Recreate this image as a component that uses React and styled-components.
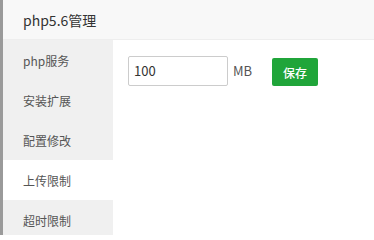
import styled, { createGlobalStyle } from "styled-components";

const GlobalStyle = createGlobalStyle`
    html, body {
        margin: 0;
        padding: 0;
        background: #fff;
        font-family: "Microsoft YaHei", "Noto Sans CJK SC", "Liberation Sans", sans-serif;
    }
`;

const Page = styled.div`
    display: flex;
    width: 374px;
    height: 235px;
    overflow: hidden;
`;

const Backdrop = styled.div`
    width: 3px;
    flex-shrink: 0;
    background: #9a9a9a;
`;

const Layer = styled.div`
    flex: 1;
    display: flex;
    flex-direction: column;
    background: #fff;
`;

const Title = styled.div`
    height: 39px;
    flex-shrink: 0;
    display: flex;
    align-items: center;
    padding-left: 20px;
    background: #f8f8f8;
    border-bottom: 1px solid #eee;
    color: #333;
    font-size: 14px;
`;

const Body = styled.div`
    flex: 1;
    display: flex;
`;

const Menu = styled.div`
    width: 110px;
    flex-shrink: 0;
    display: flex;
    flex-direction: column;
    background: #f0f0f0;
`;

const MenuItem = styled.div`
    height: 40px;
    flex-shrink: 0;
    display: flex;
    align-items: center;
    padding-left: 20px;
    font-size: 12px;
    color: #555;
    background: ${(p) => (p.$active ? "#fff" : "transparent")};
    cursor: pointer;
`;

const Content = styled.div`
    flex: 1;
    padding: 15px;
`;

const Line = styled.div`
    display: flex;
    align-items: center;
`;

const Input = styled.input`
    width: 100px;
    height: 30px;
    box-sizing: border-box;
    border: 1px solid #ccc;
    border-radius: 2px;
    padding: 0 5px;
    font-family: inherit;
    font-size: 13px;
    color: #333;
    outline: none;
`;

const Unit = styled.span`
    margin-left: 5px;
    font-size: 13px;
    color: #555;
`;

const SaveButton = styled.button`
    margin-left: 20px;
    margin-top: 3px;
    height: 28px;
    padding: 0 11px;
    border: none;
    border-radius: 2px;
    background: #20a53a;
    color: #fff;
    font-family: inherit;
    font-size: 12px;
    font-weight: 500;
    cursor: pointer;
`;

const items = ["php服务", "安装扩展", "配置修改", "上传限制", "超时限制"];

export default function App() {
    return (
        <Page>
            <GlobalStyle />
            <Backdrop />
            <Layer>
                <Title>php5.6管理</Title>
                <Body>
                    <Menu>
                        {items.map((name) => (
                            <MenuItem key={name} $active={name === "上传限制"}>
                                {name}
                            </MenuItem>
                        ))}
                    </Menu>
                    <Content>
                        <Line>
                            <Input defaultValue="100" />
                            <Unit>MB</Unit>
                            <SaveButton>保存</SaveButton>
                        </Line>
                    </Content>
                </Body>
            </Layer>
        </Page>
    );
}
